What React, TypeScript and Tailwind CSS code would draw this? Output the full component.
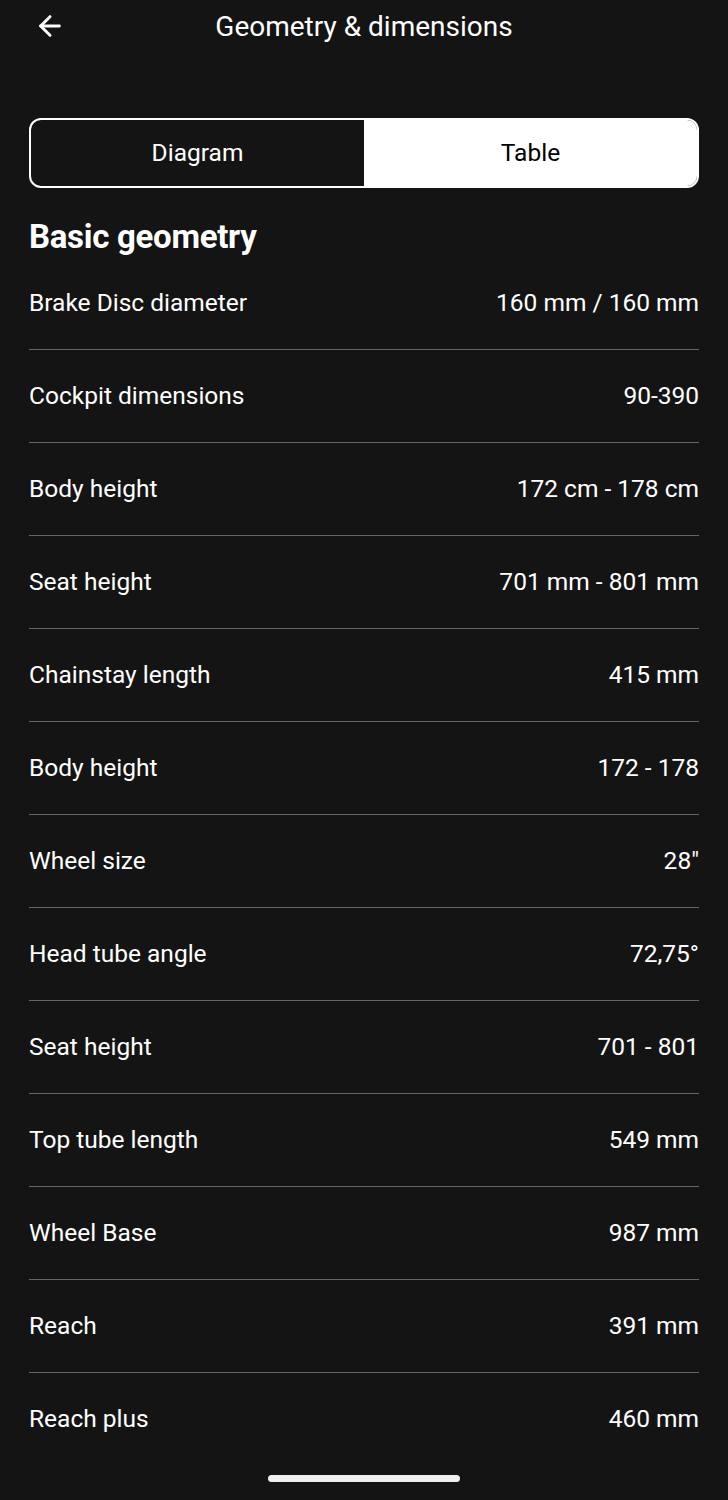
import React from "react";
import { ArrowLeft } from "lucide-react";

const rows: [string, string][] = [
  ["Brake Disc diameter", "160 mm / 160 mm"],
  ["Cockpit dimensions", "90-390"],
  ["Body height", "172 cm - 178 cm"],
  ["Seat height", "701 mm - 801 mm"],
  ["Chainstay length", "415 mm"],
  ["Body height", "172 - 178"],
  ["Wheel size", "28\""],
  ["Head tube angle", "72,75°"],
  ["Seat height", "701 - 801"],
  ["Top tube length", "549 mm"],
  ["Wheel Base", "987 mm"],
  ["Reach", "391 mm"],
  ["Reach plus", "460 mm"],
];

export default function App() {
  return (
    <div
      className="relative w-[728px] h-[1500px] overflow-hidden bg-[#141414] text-white"
      style={{ fontFamily: "Roboto, 'Liberation Sans', sans-serif" }}
    >
      <header className="relative h-[54px] flex items-center justify-center">
        <ArrowLeft className="absolute left-[34px] top-[10px]" size={32} strokeWidth={2.2} />
        <h1 className="text-[28px] font-normal leading-none">Geometry &amp; dimensions</h1>
      </header>

      <div className="mx-[29px] mt-[64px] h-[70px] grid grid-cols-2 rounded-[12px] border-2 border-white overflow-hidden">
        <div className="flex items-center justify-center text-[24.5px]">Diagram</div>
        <div className="flex items-center justify-center bg-white text-black text-[24.5px]">Table</div>
      </div>

      <h2 className="mx-[29px] mt-[29px] text-[33px] leading-[40px] font-bold tracking-[-0.3px]">Basic geometry</h2>

      <div className="mx-[29px]">
        {rows.map(([k, v], i) => (
          <div
            key={i}
            className={
              "h-[93px] flex items-center justify-between text-[24.5px] " +
              (i < rows.length - 1 ? "border-b-[1.5px] border-[#666666]" : "")
            }
          >
            <span>{k}</span>
            <span>{v}</span>
          </div>
        ))}
      </div>

      <div className="absolute left-[268px] top-[1475px] w-[192px] h-[7px] rounded-full bg-[#efefef]" />
    </div>
  );
}
